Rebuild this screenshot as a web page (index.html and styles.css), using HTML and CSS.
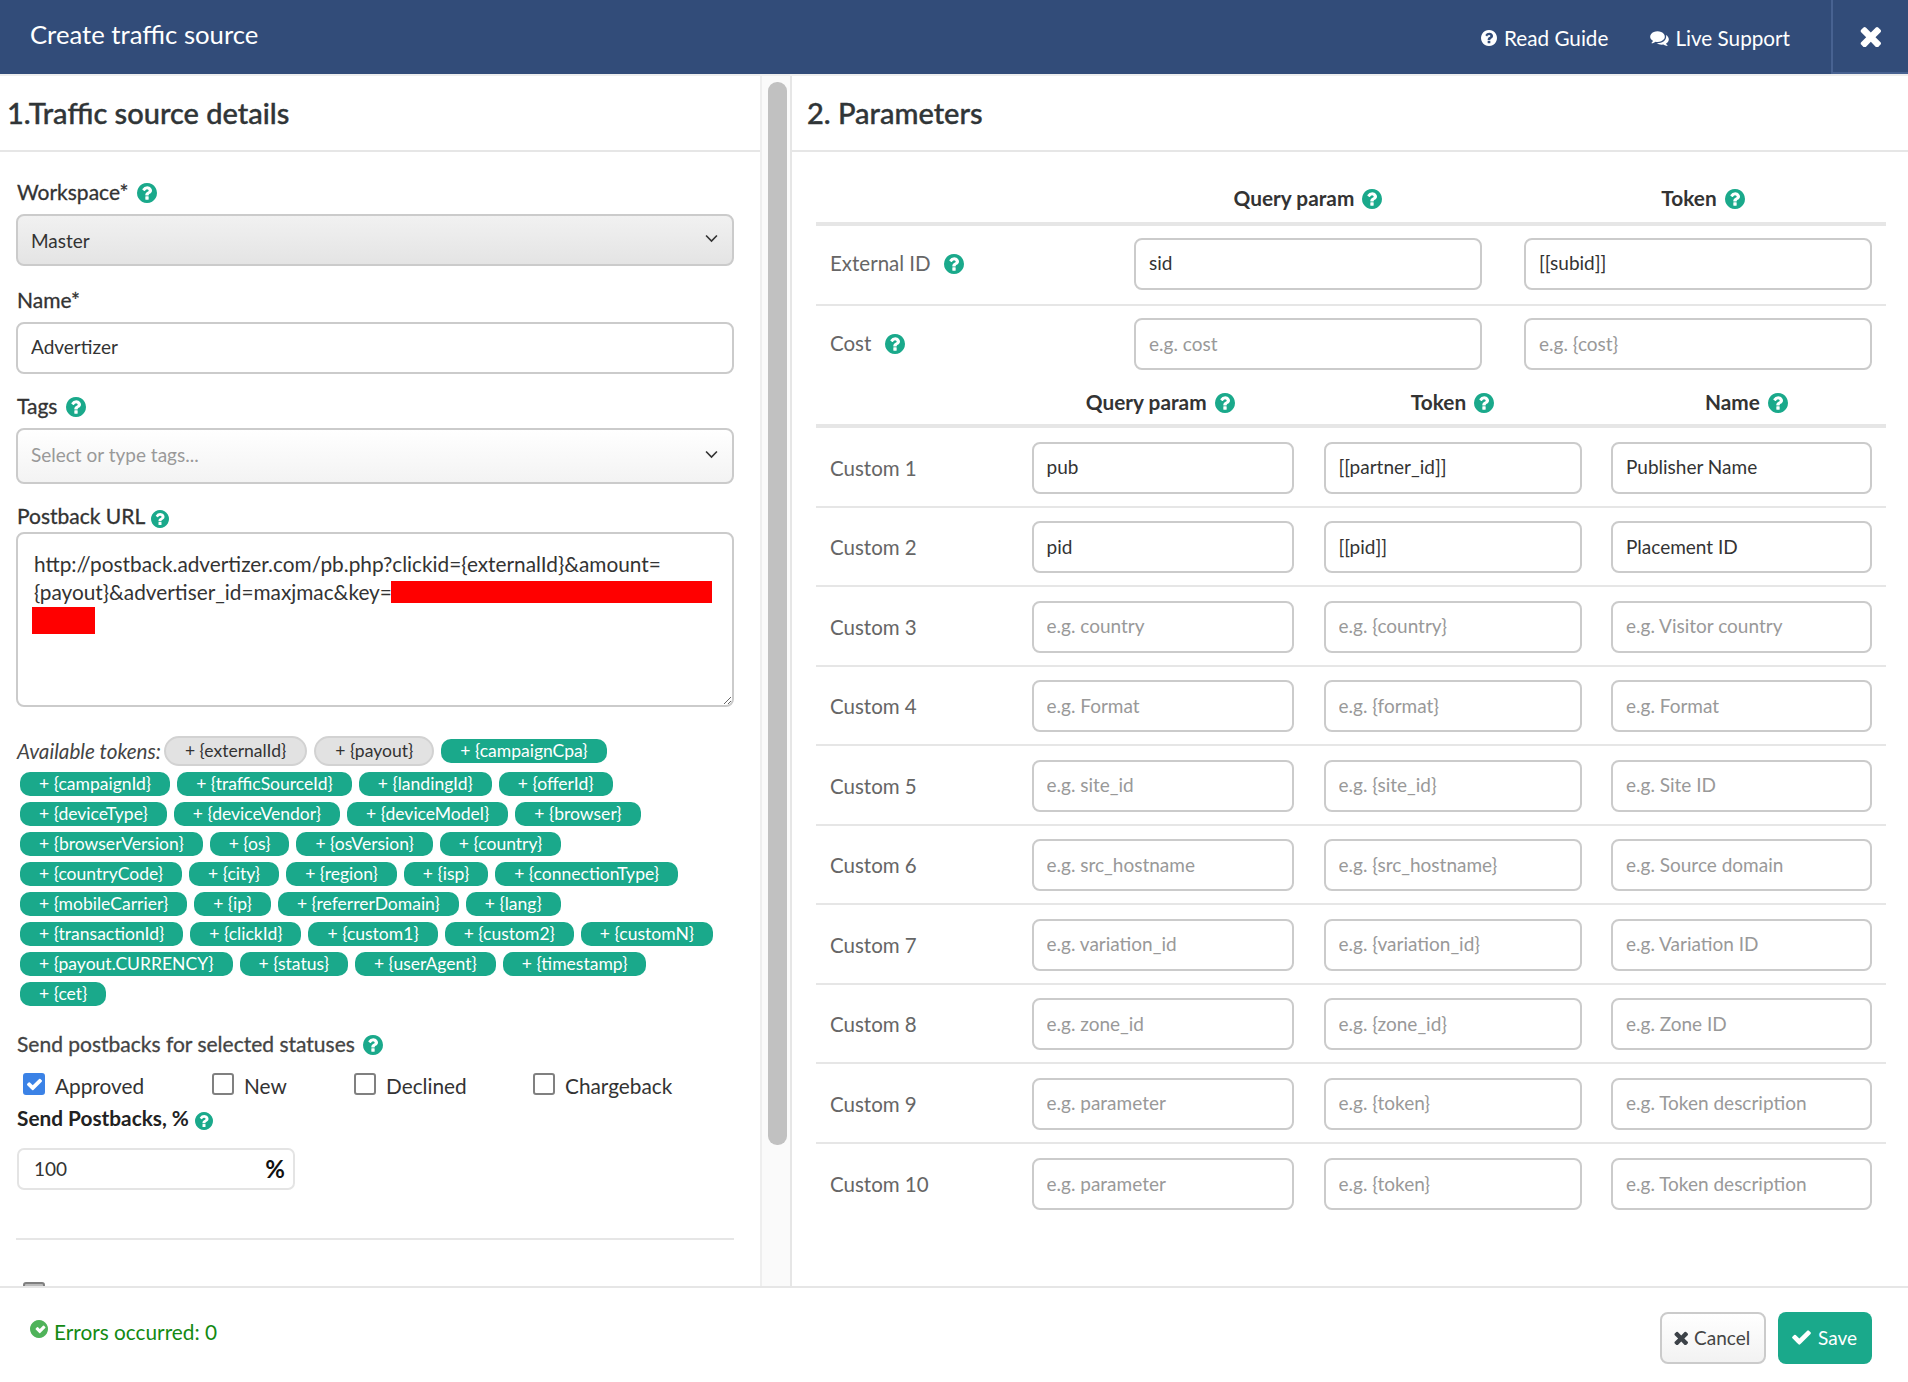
FILE: index.html
```html
<!DOCTYPE html>
<html lang="en">
<head>
  <meta charset="UTF-8" />
  <title>Create traffic source</title>
  <link rel="stylesheet" href="styles.css">
</head>
<body>
  <svg class="sprites" xmlns="http://www.w3.org/2000/svg">
    <symbol id="i-help" viewBox="128 128 1536 1536"><path d="M1024 1376v-192q0-14-9-23t-23-9h-192q-14 0-23 9t-9 23v192q0 14 9 23t23 9h192q14 0 23-9t9-23zm256-672q0-88-55.5-163t-138.5-116-170-41q-243 0-371 213-15 24 8 42l132 100q7 6 19 6 16 0 25-12 53-68 86-92 34-24 86-24 48 0 85.5 26t37.5 59q0 38-20 61t-68 45q-63 28-115.5 86.5t-52.5 125.5v36q0 14 9 23t23 9h192q14 0 23-9t9-23q0-19 21.5-49.5t54.5-49.5q32-18 49-28.5t46-35 44.5-48 28-60.5 12.5-81zm384 192q0 209-103 385.5t-279.5 279.5-385.5 103-385.5-103-279.5-279.5-103-385.5 103-385.5 279.5-279.5 385.5-103 385.5 103 279.5 279.5 103 385.5z"/></symbol>
    <symbol id="i-comments" viewBox="0 128 1792 1536"><path d="M1408 768q0 139-94 257t-256.5 186.5-353.5 68.5q-86 0-176-16-124 88-278 128-36 9-86 16h-3q-11 0-20.5-8t-11.5-21q-1-3-1-6.5t.5-6.5 2-6l2.5-5 3.5-5.5 4-5 4.5-5 4-4.5q5-6 23-25t26-29.5 22.5-29 25-38.5 20.5-44q-124-72-195-177t-71-224q0-139 94-257t256.5-186.5 353.5-68.5 353.5 68.5 256.5 186.5 94 257zm384 256q0 120-71 224.5t-195 176.5q10 24 20.5 44t25 38.5 22.5 29 26 29.5 23 25q1 1 4 4.5t4.5 5 4 5 3.5 5.5l2.5 5 2 6 .5 6.5-1 6.5q-3 14-13 22t-22 7q-50-7-86-16-154-40-278-128-90 16-176 16-271 0-472-132 58 4 88 4 161 0 309-45t264-129q125-92 192-212t67-254q0-77-23-152 129 71 204 178t75 230z"/></symbol>
    <symbol id="i-times" viewBox="262 310 1228 1216"><path d="M1490 1322q0 40-28 68l-136 136q-28 28-68 28t-68-28l-294-294-294 294q-28 28-68 28t-68-28l-136-136q-28-28-28-68t28-68l294-294-294-294q-28-28-28-68t28-68l136-136q28-28 68-28t68 28l294 294 294-294q28-28 68-28t68 28l136 136q28 28 28 68t-28 68l-294 294 294 294q28 28 28 68z"/></symbol>
    <symbol id="i-check" viewBox="121 310 1550 1240"><path d="M1671 566q0 40-28 68l-724 724-136 136q-28 28-68 28t-68-28l-136-136-362-362q-28-28-28-68t28-68l136-136q28-28 68-28t68 28l294 295 656-657q28-28 68-28t68 28l136 136q28 28 28 68z"/></symbol>
    <symbol id="i-check-circle" viewBox="0 128 1536 1536"><path fill-rule="evenodd" d="M1299 813l-422 422q-19 19-45 19t-45-19l-294-294q-19-19-19-45t19-45l102-102q19-19 45-19t45 19l147 147 275-275q19-19 45-19t45 19l102 102q19 19 19 45t-19 45zm237 83q0 209-103 385.5t-279.5 279.5-385.5 103-385.5-103-279.5-279.5-103-385.5 103-385.5 279.5-279.5 385.5-103 385.5 103 279.5 279.5 103 385.5z"/></symbol>
    <symbol id="i-chevron" viewBox="0 0 12 8"><path d="M1 1.2 6 6.4 11 1.2" fill="none" stroke="currentColor" stroke-width="1.5"/></symbol>
  </svg>

  <header class="topbar">
    <div class="topbar-title">Create traffic source</div>
    <a class="topbar-link topbar-guide"><svg class="icon-link"><use href="#i-help"/></svg>Read Guide</a>
    <a class="topbar-link topbar-support"><svg class="icon-chat"><use href="#i-comments"/></svg>Live Support</a>
    <div class="topbar-close"><svg class="icon-close"><use href="#i-times"/></svg></div>
  </header>

  <main class="panes">
    <section class="pane-left">
      <h2 class="pane-title pane-title-left">1.Traffic source details</h2>
      <div class="form">
        <label class="label label-workspace">Workspace* <svg class="help help-spaced"><use href="#i-help"/></svg></label>
        <div class="select select-grey">Master<svg class="chevron"><use href="#i-chevron"/></svg></div>

        <label class="label label-name">Name*</label>
        <input class="input" type="text" value="Advertizer">

        <label class="label label-tags">Tags <svg class="help"><use href="#i-help"/></svg></label>
        <div class="select select-tags">Select or type tags...<svg class="chevron"><use href="#i-chevron"/></svg></div>

        <label class="label label-postback">Postback URL <svg class="help help-low"><use href="#i-help"/></svg></label>
        <div class="textarea-wrap">
          <textarea class="textarea" spellcheck="false">http://postback.advertizer.com/pb.php?clickid={externalId}&amp;amount={payout}&amp;advertiser_id=maxjmac&amp;key=</textarea>
          <span class="redact redact-one"></span>
          <span class="redact redact-two"></span>
        </div>

        <div class="tokens">
          <em class="tokens-label">Available tokens:</em>
          <span class="chip chip-used">+ {externalId}</span>
          <span class="chip chip-used">+ {payout}</span>
          <span class="chip">+ {campaignCpa}</span>
          <span class="chip">+ {campaignId}</span>
          <span class="chip">+ {trafficSourceId}</span>
          <span class="chip">+ {landingId}</span>
          <span class="chip">+ {offerId}</span>
          <span class="chip">+ {deviceType}</span>
          <span class="chip">+ {deviceVendor}</span>
          <span class="chip">+ {deviceModel}</span>
          <span class="chip">+ {browser}</span>
          <span class="chip">+ {browserVersion}</span>
          <span class="chip">+ {os}</span>
          <span class="chip">+ {osVersion}</span>
          <span class="chip">+ {country}</span>
          <span class="chip">+ {countryCode}</span>
          <span class="chip">+ {city}</span>
          <span class="chip">+ {region}</span>
          <span class="chip">+ {isp}</span>
          <span class="chip">+ {connectionType}</span>
          <span class="chip">+ {mobileCarrier}</span>
          <span class="chip">+ {ip}</span>
          <span class="chip">+ {referrerDomain}</span>
          <span class="chip">+ {lang}</span>
          <span class="chip">+ {transactionId}</span>
          <span class="chip">+ {clickId}</span>
          <span class="chip">+ {custom1}</span>
          <span class="chip">+ {custom2}</span>
          <span class="chip">+ {customN}</span>
          <span class="chip">+ {payout.CURRENCY}</span>
          <span class="chip">+ {status}</span>
          <span class="chip">+ {userAgent}</span>
          <span class="chip">+ {timestamp}</span>
          <span class="chip">+ {cet}</span>
        </div>

        <label class="label label-statuses">Send postbacks for selected statuses <svg class="help"><use href="#i-help"/></svg></label>
        <div class="statuses">
          <label class="status status-approved"><span class="box box-on"><svg class="box-tick"><use href="#i-check"/></svg></span>Approved</label>
          <label class="status status-new"><span class="box"></span>New</label>
          <label class="status status-declined"><span class="box"></span>Declined</label>
          <label class="status"><span class="box"></span>Chargeback</label>
        </div>

        <label class="label label-percent">Send Postbacks, % <svg class="help help-low"><use href="#i-help"/></svg></label>
        <div class="percent-input">100<span class="percent-sign">%</span></div>

        <hr class="divider">
        <span class="box box-cut"></span>
      </div>
    </section>

    <div class="scroll-track"><div class="scroll-thumb"></div></div>

    <section class="pane-right">
      <h2 class="pane-title pane-title-right">2. Parameters</h2>
      <div class="params">
        <div class="row-head row-main">
          <span></span>
          <span class="col-head">Query param <svg class="help"><use href="#i-help"/></svg></span>
          <span class="col-head">Token <svg class="help"><use href="#i-help"/></svg></span>
        </div>
        <div class="row row-main">
          <span class="row-label">External ID <svg class="help help-row"><use href="#i-help"/></svg></span>
          <input class="input" type="text" value="sid">
          <input class="input" type="text" value="[[subid]]">
        </div>
        <div class="row row-main row-last">
          <span class="row-label">Cost <svg class="help help-row"><use href="#i-help"/></svg></span>
          <input class="input" type="text" placeholder="e.g. cost">
          <input class="input" type="text" placeholder="e.g. {cost}">
        </div>

        <div class="row-head row-custom row-head-second">
          <span></span>
          <span class="col-head">Query param <svg class="help"><use href="#i-help"/></svg></span>
          <span class="col-head">Token <svg class="help"><use href="#i-help"/></svg></span>
          <span class="col-head">Name <svg class="help"><use href="#i-help"/></svg></span>
        </div>
        <div class="row row-custom"><span class="row-label">Custom 1</span><input class="input" type="text" value="pub"><input class="input" type="text" value="[[partner_id]]"><input class="input" type="text" value="Publisher Name"></div>
        <div class="row row-custom"><span class="row-label">Custom 2</span><input class="input" type="text" value="pid"><input class="input" type="text" value="[[pid]]"><input class="input" type="text" value="Placement ID"></div>
        <div class="row row-custom"><span class="row-label">Custom 3</span><input class="input" type="text" placeholder="e.g. country"><input class="input" type="text" placeholder="e.g. {country}"><input class="input" type="text" placeholder="e.g. Visitor country"></div>
        <div class="row row-custom"><span class="row-label">Custom 4</span><input class="input" type="text" placeholder="e.g. Format"><input class="input" type="text" placeholder="e.g. {format}"><input class="input" type="text" placeholder="e.g. Format"></div>
        <div class="row row-custom"><span class="row-label">Custom 5</span><input class="input" type="text" placeholder="e.g. site_id"><input class="input" type="text" placeholder="e.g. {site_id}"><input class="input" type="text" placeholder="e.g. Site ID"></div>
        <div class="row row-custom"><span class="row-label">Custom 6</span><input class="input" type="text" placeholder="e.g. src_hostname"><input class="input" type="text" placeholder="e.g. {src_hostname}"><input class="input" type="text" placeholder="e.g. Source domain"></div>
        <div class="row row-custom"><span class="row-label">Custom 7</span><input class="input" type="text" placeholder="e.g. variation_id"><input class="input" type="text" placeholder="e.g. {variation_id}"><input class="input" type="text" placeholder="e.g. Variation ID"></div>
        <div class="row row-custom"><span class="row-label">Custom 8</span><input class="input" type="text" placeholder="e.g. zone_id"><input class="input" type="text" placeholder="e.g. {zone_id}"><input class="input" type="text" placeholder="e.g. Zone ID"></div>
        <div class="row row-custom"><span class="row-label">Custom 9</span><input class="input" type="text" placeholder="e.g. parameter"><input class="input" type="text" placeholder="e.g. {token}"><input class="input" type="text" placeholder="e.g. Token description"></div>
        <div class="row row-custom row-last"><span class="row-label">Custom 10</span><input class="input" type="text" placeholder="e.g. parameter"><input class="input" type="text" placeholder="e.g. {token}"><input class="input" type="text" placeholder="e.g. Token description"></div>
      </div>
    </section>
  </main>

  <footer class="footer">
    <div class="errors"><svg class="errors-icon"><use href="#i-check-circle"/></svg>Errors occurred: 0</div>
    <button class="btn btn-cancel" type="button"><svg class="btn-x"><use href="#i-times"/></svg>Cancel</button>
    <button class="btn btn-save" type="button"><svg class="btn-check"><use href="#i-check"/></svg>Save</button>
  </footer>
</body>
</html>
```

FILE: styles.css
```css
:root {
  --navy: #324c79;
  --teal: #1aa98b;
  --line: #e6e6e6;
  --field: #cbcbcb;
}
* {
  box-sizing: border-box;
}
html, body {
  height: 100%;
}
body {
  margin: 0;
  display: flex;
  flex-direction: column;
  overflow: hidden;
  font-family: "Lato", "Open Sans", sans-serif;
  font-size: 19px;
  color: #333;
  background: #fff;
}
.sprites {
  display: none;
}
svg {
  fill: currentColor;
}

/* top bar */
.topbar {
  flex: none;
  display: flex;
  align-items: center;
  height: 76px;
  background: var(--navy);
  border-bottom: 2px solid #eee;
  color: #fff;
}
.topbar-title {
  flex: 1;
  margin: -6px 0 0 30px;
  font-size: 25.7px;
}
.topbar-link {
  display: flex;
  align-items: center;
  font-size: 20.7px;
  margin-top: 1px;
}
.icon-link {
  width: 16px;
  height: 16px;
  margin-right: 7px;
}
.icon-chat {
  width: 19px;
  height: 16px;
  margin-right: 6px;
}
.topbar-support {
  margin-left: 42px;
  margin-right: 41px;
}
.topbar-close {
  display: flex;
  align-items: center;
  justify-content: center;
  align-self: stretch;
  width: 77px;
  border-left: 2px solid #486291;
  border-bottom: 2px solid #486291;
}
.icon-close {
  width: 21px;
  height: 21px;
}

/* panes */
.panes {
  flex: 1;
  display: flex;
  min-height: 0;
}
.pane-left {
  width: 762px;
  flex: none;
  overflow: hidden;
  border-right: 2px solid #eee;
}
.pane-title {
  margin: 0;
  height: 76px;
  line-height: 74px;
  font-size: 29px;
  font-weight: 500;
  color: #303537;
  border-bottom: 2px solid var(--line);
  -webkit-text-stroke: 0.4px #303537;
}
.pane-title-left {
  padding-left: 7px;
}
.pane-title-right {
  padding-left: 15px;
}
.scroll-track {
  width: 28px;
  flex: none;
  padding: 6px 3px 0 6px;
  background: #fafafa;
}
.scroll-thumb {
  height: 1063px;
  background: #c1c1c1;
  border-radius: 9px;
}
.pane-right {
  flex: 1;
  min-width: 0;
  border-left: 2px solid var(--line);
}

/* left form */
.form {
  padding: 28px 26px 0 16px;
}
.label {
  display: block;
  height: 24px;
  margin-left: 1px;
  line-height: 24px;
  font-size: 21px;
  color: #333;
  -webkit-text-stroke: 0.3px #333;
  white-space: nowrap;
}
.help {
  width: 20px;
  height: 20px;
  margin-left: 3px;
  color: var(--teal);
  vertical-align: -3px;
  stroke: none;
}
.help-low {
  width: 18px;
  height: 18px;
  margin-left: 1px;
  vertical-align: -4px;
}
.help-spaced {
  margin-left: 3px;
}
.label-workspace {
  margin-bottom: 10px;
}
.label-name {
  margin-top: 22px;
  margin-bottom: 10px;
}
.label.label-tags {
  margin-top: 20px;
  margin-bottom: 10px;
}
.label.label-postback {
  margin-top: 20px;
  margin-bottom: 4px;
}
.select {
  display: flex;
  align-items: center;
  height: 52px;
  padding: 0 14px 0 13px;
  border: 2px solid var(--field);
  border-radius: 8px;
}
.select-grey {
  background: linear-gradient(#f1f1f1, #e4e4e4);
}
.select-tags {
  height: 56px;
  padding-bottom: 4px;
  color: #999;
  background: linear-gradient(#fff, #f3f3f3);
}
.select-tags .chevron {
  margin-top: 0;
}
.chevron {
  width: 13px;
  height: 9px;
  margin: -4px 0 0 auto;
  color: #333;
}
.input {
  display: block;
  width: 100%;
  height: 52px;
  padding: 0 14px 2px 13px;
  border: 2px solid var(--field);
  border-radius: 8px;
  background: #fff;
  font: inherit;
  color: #333;
  outline: none;
}
.form .input {
  padding-bottom: 4px;
}
.input::placeholder {
  color: #999;
  opacity: 1;
}
.textarea-wrap {
  position: relative;
}
.textarea {
  display: block;
  width: 100%;
  height: 175px;
  padding: 16px 16px;
  border: 2px solid var(--field);
  border-radius: 8px;
  font: inherit;
  font-size: 20.8px;
  line-height: 28px;
  color: #333;
  outline: none;
  overflow: hidden;
}
.redact {
  position: absolute;
  background: #f00;
}
.redact-one {
  left: 375px;
  top: 49px;
  width: 321px;
  height: 22px;
}
.redact-two {
  left: 16px;
  top: 75px;
  width: 63px;
  height: 27px;
}

/* tokens */
.tokens {
  display: flex;
  flex-wrap: wrap;
  align-items: center;
  gap: 6px 7px;
  margin-top: 29px;
  padding: 0 10px 0 4px;
}
.tokens-label {
  margin: 0 -4px 0 -3px;
  font-size: 20.7px;
  color: #444;
}
.chip {
  height: 24px;
  line-height: 24px;
  padding: 0 19px;
  border-radius: 10px;
  background: var(--teal);
  color: #fff;
  font-size: 17.55px;
  white-space: nowrap;
}
.chip-used {
  height: 30px;
  line-height: 26px;
  border: 2px solid #d2d2d2;
  border-radius: 15px;
  background: #e2e2e2;
  color: #333;
}

/* statuses */
.label.label-statuses {
  margin-top: 26px;
  margin-bottom: 17px;
  color: #444;
  -webkit-text-stroke: 0.3px #444;
}
.statuses {
  display: flex;
  height: 28px;
  padding-left: 7px;
}
.status {
  display: flex;
  align-items: flex-start;
  font-size: 20.8px;
  line-height: 26px;
  height: 28px;
}
.status-approved {
  width: 189px;
}
.status-new {
  width: 142px;
}
.status-declined {
  width: 179px;
}
.box {
  flex: none;
  display: inline-flex;
  align-items: center;
  justify-content: center;
  width: 22px;
  height: 22px;
  margin-right: 10px;
  border: 2px solid #808080;
  border-radius: 3px;
  background: #fff;
}
.box-on {
  background: #3b82e6;
  border-color: #3b82e6;
  color: #fff;
}
.box-tick {
  width: 15px;
  height: 13px;
}
.box-cut {
  display: flex;
  margin: 42px 0 0 7px;
  background: #bbb;
}
.label.label-percent {
  margin-top: 5px;
  margin-bottom: 18px;
  font-weight: 700;
  font-size: 20.8px;
  color: #222;
  -webkit-text-stroke: 0;
}
.percent-input {
  display: flex;
  align-items: center;
  justify-content: space-between;
  width: 278px;
  height: 42px;
  margin-left: 1px;
  padding: 0 8px 2px 15px;
  border: 2px solid #e4e4e4;
  border-radius: 7px;
}
.percent-sign {
  font-weight: 700;
  font-size: 24px;
  color: #111;
}
.divider {
  height: 2px;
  margin: 48px 0 0;
  border: 0;
  background: var(--line);
}

/* right table */
.params {
  padding: 0 22px 0 24px;
}
.row-head {
  display: grid;
  align-items: center;
  height: 74px;
  padding-top: 20px;
  border-bottom: 4px solid var(--line);
}
.row-head-second {
  height: 43px;
  padding-top: 0;
  padding-bottom: 6px;
}
.col-head {
  text-align: center;
  font-size: 20.8px;
  font-weight: 700;
  color: #333;
}
.row-main .col-head:nth-child(3),
.row-custom .col-head:nth-child(4) {
  padding-left: 10px;
}
.row-custom .col-head:nth-child(2) {
  padding-right: 5px;
}
.row {
  display: grid;
  align-items: center;
  height: 79.5px;
  border-bottom: 2px solid var(--line);
}
.row-last {
  border-bottom: 0;
}
.row-main {
  grid-template-columns: 276px 348px 348px;
  column-gap: 42px;
  padding-right: 12px;
}
.row.row-main {
  height: 79.67px;
  padding-bottom: 2px;
}
.row-main .row-label {
  margin-top: -2px;
}
.row-custom {
  grid-template-columns: 186px 262.5px 258px 261px;
  column-gap: 29.5px;
  padding-right: 12px;
}
.row.row-custom {
  padding-top: 1px;
}
.row-label {
  padding-left: 14px;
  font-size: 20.5px;
  color: #666;
  white-space: nowrap;
}
.help-row {
  margin-left: 8px;
}

/* footer */
.footer {
  flex: none;
  display: flex;
  align-items: center;
  height: 96px;
  padding: 6px 36px 0 30px;
  border-top: 2px solid var(--line);
  background: #fff;
}
.errors {
  flex: 1;
  display: flex;
  align-items: center;
  margin-top: -14px;
  font-size: 20.8px;
  color: #138a13;
}
.errors-icon {
  width: 18px;
  height: 18px;
  margin: -4px 6px 0 0;
  color: #4fb35a;
}
.btn {
  display: flex;
  align-items: center;
  height: 52px;
  padding-bottom: 2px;
  border-radius: 8px;
  font: inherit;
  cursor: pointer;
}
.btn-cancel {
  width: 106px;
  padding-left: 12px;
  padding-right: 12px;
  border: 2px solid var(--field);
  background: linear-gradient(#fff, #f2f2f2);
  color: #444;
}
.btn-x {
  width: 14px;
  height: 14px;
  margin-right: 6px;
  color: #3c4248;
}
.btn-save {
  width: 94px;
  margin-left: 12px;
  padding-left: 14px;
  padding-right: 14px;
  border: 0;
  background: var(--teal);
  color: #fff;
}
.btn-check {
  width: 19px;
  height: 15px;
  margin-right: 7px;
}
```
